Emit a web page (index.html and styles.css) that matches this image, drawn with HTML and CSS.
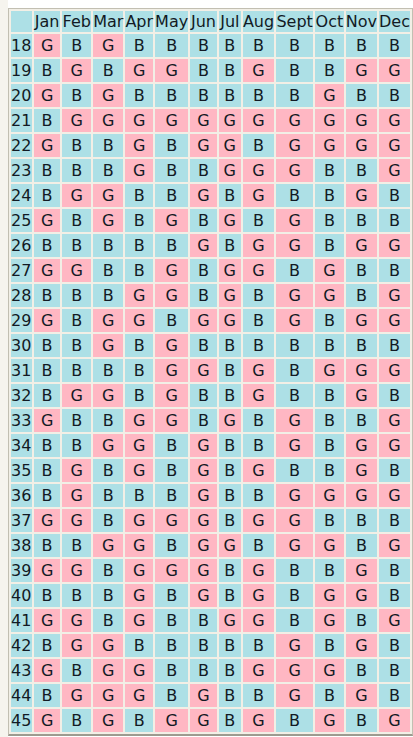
FILE: index.html
```html
<!DOCTYPE html>
<html>
<head>
<meta charset="utf-8">
<title>Chinese Gender Chart</title>
<link rel="stylesheet" href="styles.css">
</head>
<body>
<div class="page">
<table class="chart">
<colgroup>
<col class="c-age"><col class="c-jan"><col class="c-feb"><col class="c-mar"><col class="c-apr"><col class="c-may"><col class="c-jun"><col class="c-jul"><col class="c-aug"><col class="c-sep"><col class="c-oct"><col class="c-nov"><col class="c-dec">
</colgroup>
<thead>
<tr><th class="corner"></th><th>Jan</th><th>Feb</th><th>Mar</th><th>Apr</th><th>May</th><th>Jun</th><th>Jul</th><th>Aug</th><th>Sept</th><th>Oct</th><th>Nov</th><th>Dec</th></tr>
</thead>
<tbody>
<tr><th>18</th><td class="g">G</td><td class="b">B</td><td class="g">G</td><td class="b">B</td><td class="b">B</td><td class="b">B</td><td class="b">B</td><td class="b">B</td><td class="b">B</td><td class="b">B</td><td class="b">B</td><td class="b">B</td></tr>
<tr><th>19</th><td class="b">B</td><td class="g">G</td><td class="b">B</td><td class="g">G</td><td class="g">G</td><td class="b">B</td><td class="b">B</td><td class="g">G</td><td class="b">B</td><td class="b">B</td><td class="g">G</td><td class="g">G</td></tr>
<tr><th>20</th><td class="g">G</td><td class="b">B</td><td class="g">G</td><td class="b">B</td><td class="b">B</td><td class="b">B</td><td class="b">B</td><td class="b">B</td><td class="b">B</td><td class="g">G</td><td class="b">B</td><td class="b">B</td></tr>
<tr><th>21</th><td class="b">B</td><td class="g">G</td><td class="g">G</td><td class="g">G</td><td class="g">G</td><td class="g">G</td><td class="g">G</td><td class="g">G</td><td class="g">G</td><td class="g">G</td><td class="g">G</td><td class="g">G</td></tr>
<tr><th>22</th><td class="g">G</td><td class="b">B</td><td class="b">B</td><td class="g">G</td><td class="b">B</td><td class="g">G</td><td class="g">G</td><td class="b">B</td><td class="g">G</td><td class="g">G</td><td class="g">G</td><td class="g">G</td></tr>
<tr><th>23</th><td class="b">B</td><td class="b">B</td><td class="b">B</td><td class="g">G</td><td class="b">B</td><td class="b">B</td><td class="g">G</td><td class="g">G</td><td class="g">G</td><td class="b">B</td><td class="b">B</td><td class="g">G</td></tr>
<tr><th>24</th><td class="b">B</td><td class="g">G</td><td class="g">G</td><td class="b">B</td><td class="b">B</td><td class="g">G</td><td class="b">B</td><td class="g">G</td><td class="b">B</td><td class="b">B</td><td class="g">G</td><td class="b">B</td></tr>
<tr><th>25</th><td class="g">G</td><td class="b">B</td><td class="g">G</td><td class="b">B</td><td class="g">G</td><td class="b">B</td><td class="g">G</td><td class="b">B</td><td class="g">G</td><td class="b">B</td><td class="b">B</td><td class="b">B</td></tr>
<tr><th>26</th><td class="b">B</td><td class="b">B</td><td class="b">B</td><td class="b">B</td><td class="b">B</td><td class="g">G</td><td class="b">B</td><td class="g">G</td><td class="g">G</td><td class="b">B</td><td class="g">G</td><td class="g">G</td></tr>
<tr><th>27</th><td class="g">G</td><td class="g">G</td><td class="b">B</td><td class="b">B</td><td class="g">G</td><td class="b">B</td><td class="g">G</td><td class="g">G</td><td class="b">B</td><td class="g">G</td><td class="b">B</td><td class="b">B</td></tr>
<tr><th>28</th><td class="b">B</td><td class="b">B</td><td class="b">B</td><td class="g">G</td><td class="g">G</td><td class="b">B</td><td class="g">G</td><td class="b">B</td><td class="g">G</td><td class="g">G</td><td class="b">B</td><td class="g">G</td></tr>
<tr><th>29</th><td class="g">G</td><td class="b">B</td><td class="g">G</td><td class="g">G</td><td class="b">B</td><td class="g">G</td><td class="g">G</td><td class="b">B</td><td class="g">G</td><td class="b">B</td><td class="g">G</td><td class="g">G</td></tr>
<tr><th>30</th><td class="b">B</td><td class="b">B</td><td class="g">G</td><td class="b">B</td><td class="g">G</td><td class="b">B</td><td class="b">B</td><td class="b">B</td><td class="b">B</td><td class="b">B</td><td class="b">B</td><td class="b">B</td></tr>
<tr><th>31</th><td class="b">B</td><td class="b">B</td><td class="b">B</td><td class="b">B</td><td class="g">G</td><td class="g">G</td><td class="b">B</td><td class="g">G</td><td class="b">B</td><td class="g">G</td><td class="g">G</td><td class="g">G</td></tr>
<tr><th>32</th><td class="b">B</td><td class="g">G</td><td class="g">G</td><td class="b">B</td><td class="g">G</td><td class="b">B</td><td class="b">B</td><td class="g">G</td><td class="b">B</td><td class="b">B</td><td class="g">G</td><td class="b">B</td></tr>
<tr><th>33</th><td class="g">G</td><td class="b">B</td><td class="b">B</td><td class="g">G</td><td class="g">G</td><td class="b">B</td><td class="g">G</td><td class="b">B</td><td class="g">G</td><td class="b">B</td><td class="b">B</td><td class="g">G</td></tr>
<tr><th>34</th><td class="b">B</td><td class="b">B</td><td class="g">G</td><td class="g">G</td><td class="b">B</td><td class="g">G</td><td class="b">B</td><td class="b">B</td><td class="g">G</td><td class="b">B</td><td class="g">G</td><td class="g">G</td></tr>
<tr><th>35</th><td class="b">B</td><td class="g">G</td><td class="b">B</td><td class="g">G</td><td class="b">B</td><td class="g">G</td><td class="b">B</td><td class="g">G</td><td class="b">B</td><td class="b">B</td><td class="g">G</td><td class="b">B</td></tr>
<tr><th>36</th><td class="b">B</td><td class="g">G</td><td class="b">B</td><td class="b">B</td><td class="b">B</td><td class="g">G</td><td class="b">B</td><td class="b">B</td><td class="g">G</td><td class="g">G</td><td class="g">G</td><td class="g">G</td></tr>
<tr><th>37</th><td class="g">G</td><td class="g">G</td><td class="b">B</td><td class="g">G</td><td class="g">G</td><td class="g">G</td><td class="b">B</td><td class="g">G</td><td class="g">G</td><td class="b">B</td><td class="b">B</td><td class="b">B</td></tr>
<tr><th>38</th><td class="b">B</td><td class="b">B</td><td class="g">G</td><td class="g">G</td><td class="b">B</td><td class="g">G</td><td class="g">G</td><td class="b">B</td><td class="g">G</td><td class="g">G</td><td class="b">B</td><td class="g">G</td></tr>
<tr><th>39</th><td class="g">G</td><td class="g">G</td><td class="b">B</td><td class="g">G</td><td class="g">G</td><td class="g">G</td><td class="b">B</td><td class="g">G</td><td class="b">B</td><td class="b">B</td><td class="g">G</td><td class="b">B</td></tr>
<tr><th>40</th><td class="b">B</td><td class="b">B</td><td class="b">B</td><td class="g">G</td><td class="b">B</td><td class="g">G</td><td class="b">B</td><td class="g">G</td><td class="b">B</td><td class="g">G</td><td class="g">G</td><td class="b">B</td></tr>
<tr><th>41</th><td class="g">G</td><td class="g">G</td><td class="b">B</td><td class="g">G</td><td class="b">B</td><td class="b">B</td><td class="g">G</td><td class="g">G</td><td class="b">B</td><td class="g">G</td><td class="b">B</td><td class="g">G</td></tr>
<tr><th>42</th><td class="b">B</td><td class="g">G</td><td class="g">G</td><td class="b">B</td><td class="b">B</td><td class="b">B</td><td class="b">B</td><td class="b">B</td><td class="g">G</td><td class="b">B</td><td class="g">G</td><td class="b">B</td></tr>
<tr><th>43</th><td class="g">G</td><td class="b">B</td><td class="g">G</td><td class="g">G</td><td class="b">B</td><td class="b">B</td><td class="b">B</td><td class="g">G</td><td class="g">G</td><td class="g">G</td><td class="b">B</td><td class="b">B</td></tr>
<tr><th>44</th><td class="b">B</td><td class="g">G</td><td class="g">G</td><td class="g">G</td><td class="b">B</td><td class="g">G</td><td class="b">B</td><td class="b">B</td><td class="g">G</td><td class="b">B</td><td class="g">G</td><td class="b">B</td></tr>
<tr><th>45</th><td class="g">G</td><td class="b">B</td><td class="g">G</td><td class="b">B</td><td class="g">G</td><td class="g">G</td><td class="b">B</td><td class="g">G</td><td class="b">B</td><td class="g">G</td><td class="b">B</td><td class="g">G</td></tr>
</tbody>
</table>
</div>
</body>
</html>
```

FILE: styles.css
```css
html, body {
  margin: 0;
  padding: 0;
  background: #ffffff;
}

.page {
  padding: 8px 0 0 8px;
  background: linear-gradient(to right, #f6f4ee 0, #f6f4ee 8px, #ffffff 8px);
  min-height: 737px;
  box-sizing: border-box;
}

.chart {
  table-layout: fixed;
  border-collapse: separate;
  border-spacing: 2px;
  background: #f2efe6;
  border: 1px solid #c2bfb2;
  border-bottom: 2px solid #9d9b90;
  font-family: "DejaVu Sans", Verdana, sans-serif;
  font-size: 16px;
  color: #121a24;
}

.c-age { width: 21px; }
.c-jan { width: 27px; }
.c-feb { width: 29px; }
.c-mar { width: 29px; }
.c-apr { width: 27px; }
.c-may { width: 32px; }
.c-jun { width: 27px; }
.c-jul { width: 23px; }
.c-aug { width: 30px; }
.c-sep { width: 37px; }
.c-oct { width: 29px; }
.c-nov { width: 30px; }
.c-dec { width: 29px; }

.chart th,
.chart td {
  padding: 0;
  height: 23px;
  font-weight: normal;
  text-align: center;
  white-space: nowrap;
  overflow: visible;
  background: #ade0e6;
}

.chart thead th {
  height: 21px;
}

.chart tbody th {
  text-align: left;
}

.chart td.g {
  background: #ffb7c3;
}

.chart td.b {
  background: #ade0e6;
}
```
